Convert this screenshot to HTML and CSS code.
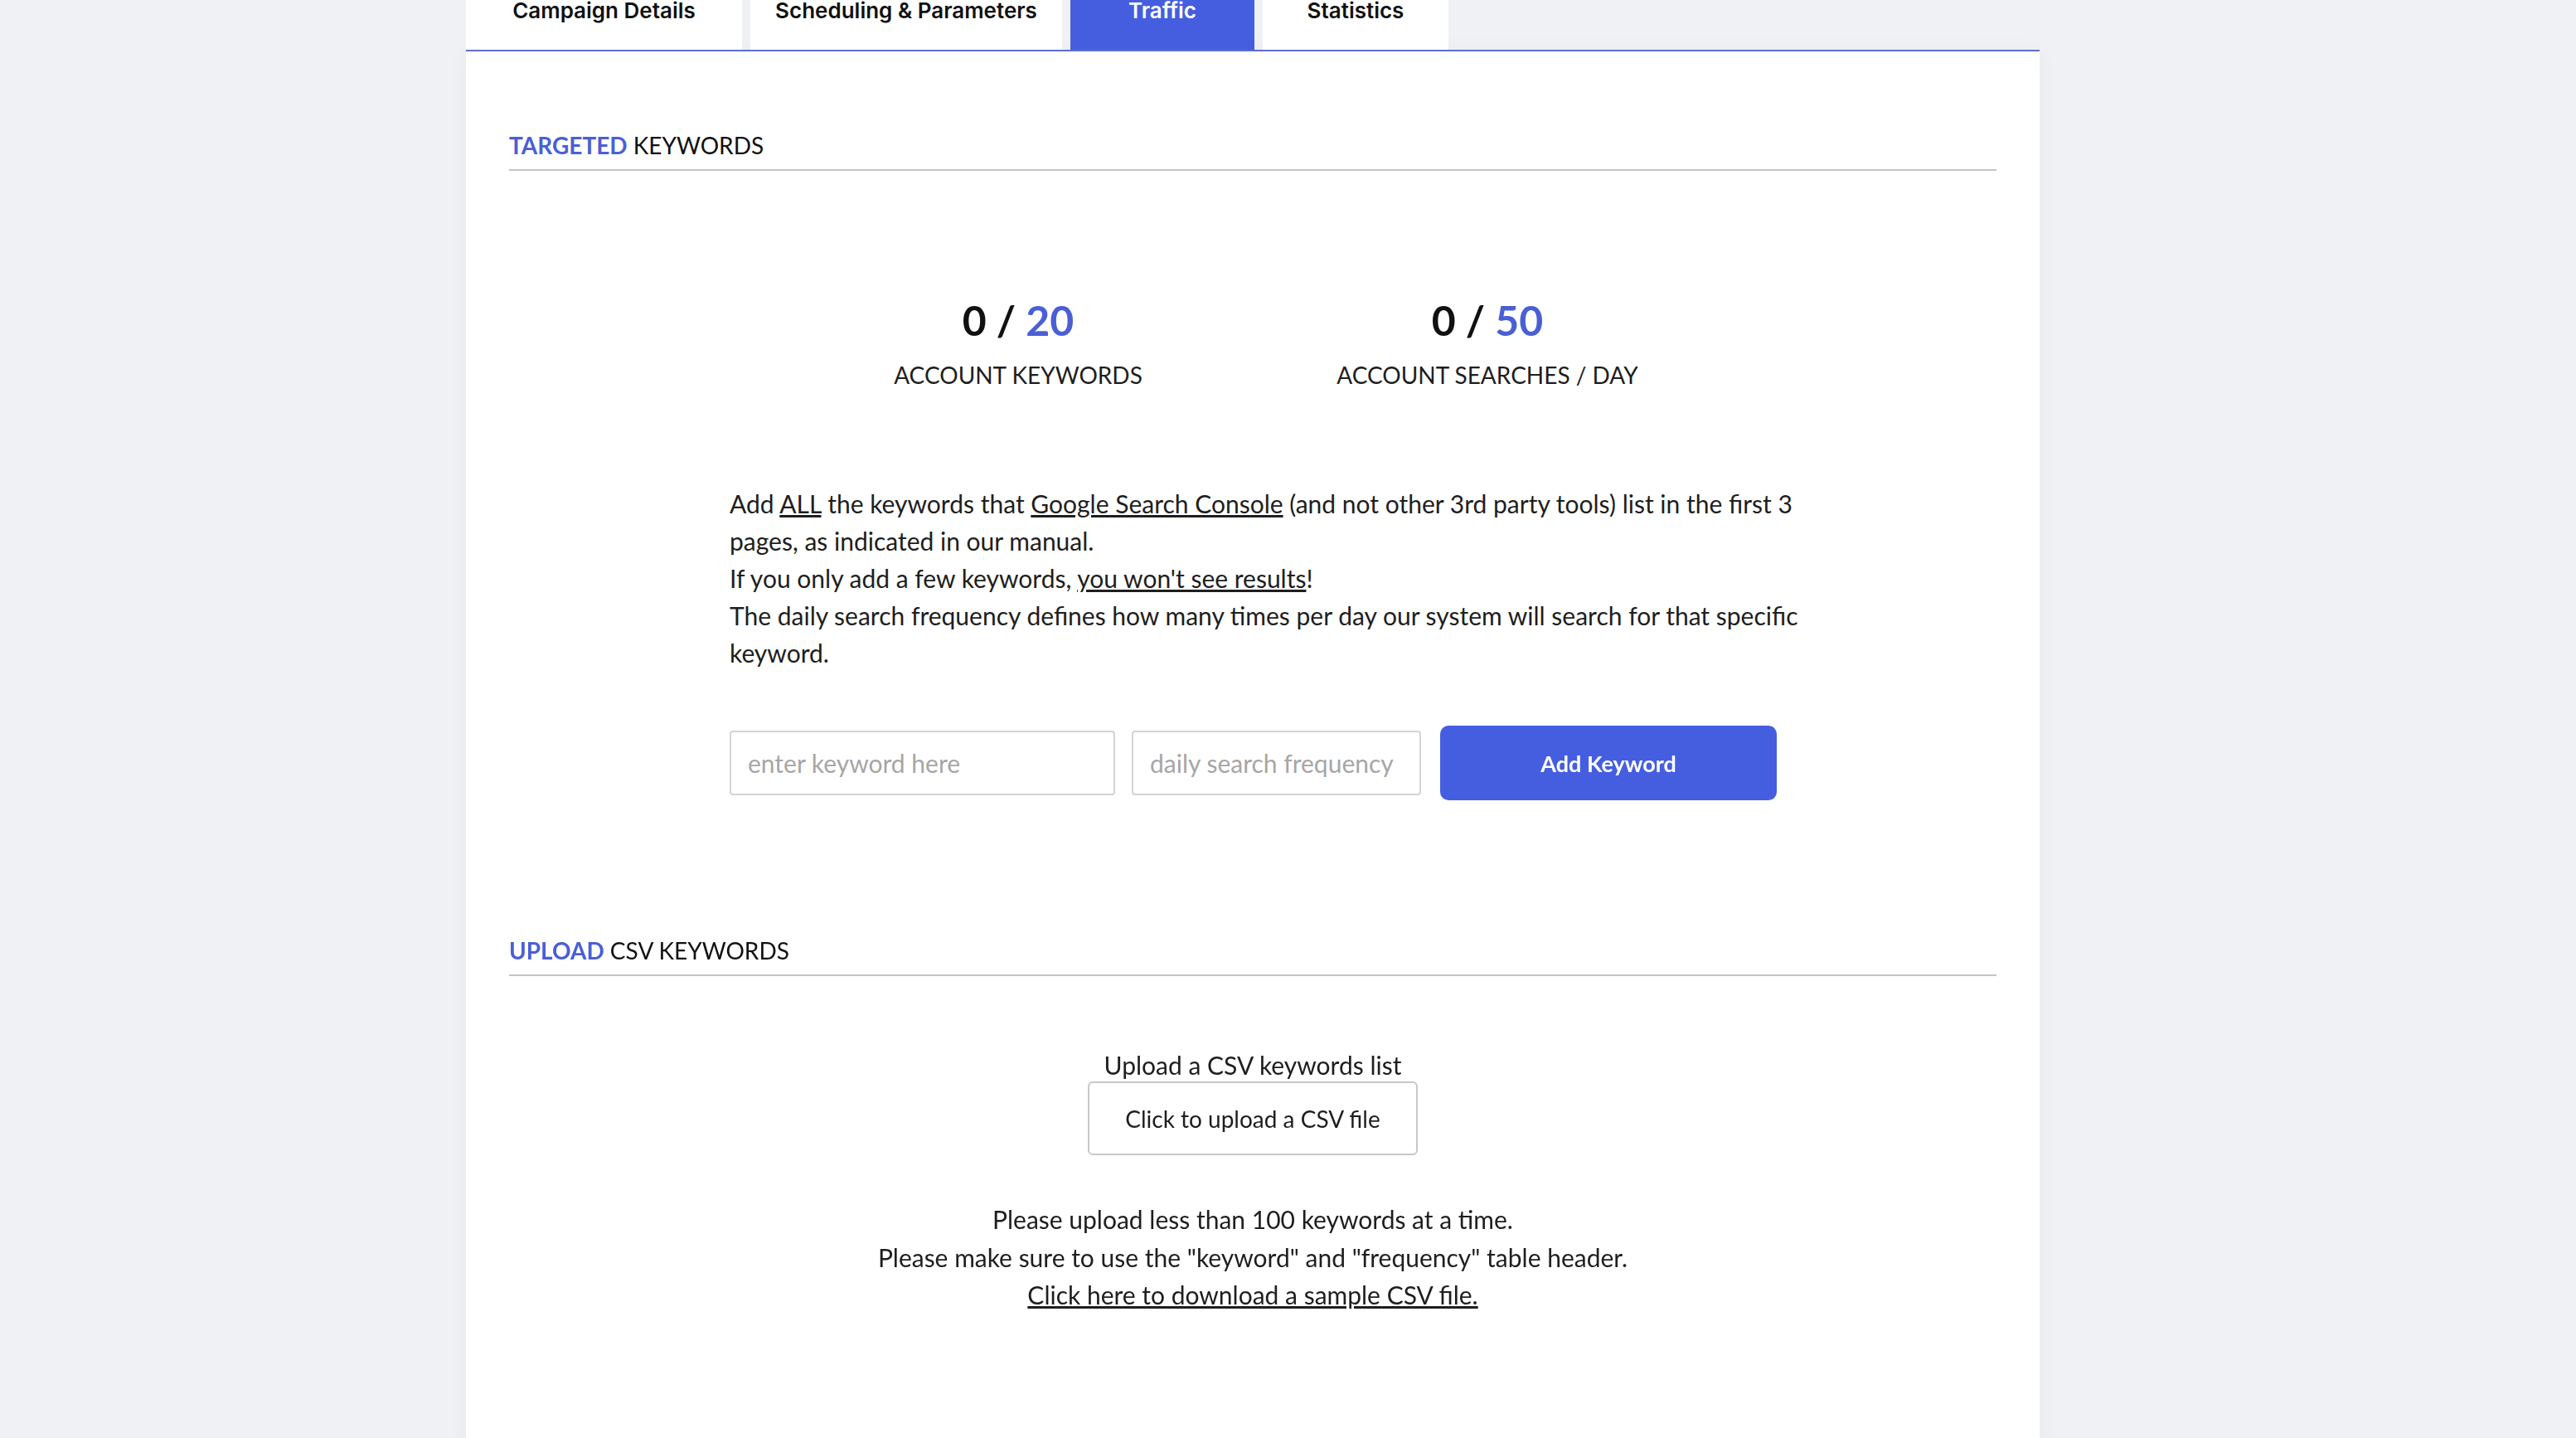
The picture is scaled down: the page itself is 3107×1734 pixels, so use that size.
FILE: index.html
```html
<!DOCTYPE html>
<html lang="en">
<head>
    <meta charset="UTF-8">
    <meta name="viewport" content="width=device-width, initial-scale=1.0">
    <title>Campaign - Traffic</title>
    <link rel="stylesheet" href="styles.css">
</head>
<body>
    <div class="page">
        <nav class="tabs">
            <a class="tab" href="#">Campaign Details</a>
            <a class="tab" href="#">Scheduling &amp; Parameters</a>
            <a class="tab active" href="#">Traffic</a>
            <a class="tab" href="#">Statistics</a>
        </nav>

        <div class="card">
            <h2 class="section-title"><span class="accent">TARGETED</span> KEYWORDS</h2>

            <div class="stats">
                <div class="stat">
                    <div class="stat-value">0 / <span class="accent">20</span></div>
                    <div class="stat-label">ACCOUNT KEYWORDS</div>
                </div>
                <div class="stat">
                    <div class="stat-value">0 / <span class="accent">50</span></div>
                    <div class="stat-label">ACCOUNT SEARCHES / DAY</div>
                </div>
            </div>

            <div class="intro">
                <p>Add <a href="#">ALL</a> the keywords that <a href="#">Google Search Console</a> (and not other 3rd party tools) list in the first 3 pages, as indicated in our manual.</p>
                <p>If you only add a few keywords, <a href="#">you won't see results</a>!</p>
                <p>The daily search frequency defines how many times per day our system will search for that specific keyword.</p>

                <form class="keyword-form" onsubmit="return false;">
                    <input type="text" class="field field-keyword" placeholder="enter keyword here" autofocus>
                    <input type="number" class="field field-frequency" placeholder="daily search frequency">
                    <button class="button" type="submit">Add Keyword</button>
                </form>
            </div>

            <h2 class="section-title upload-title"><span class="accent">UPLOAD</span> CSV KEYWORDS</h2>

            <div class="upload">
                <label class="upload-label" for="csv_file">Upload a CSV keywords list</label>
                <label class="upload-button" for="csv_file">Click to upload a CSV file</label>
                <input type="file" id="csv_file" accept=".csv">

                <div class="upload-notes">
                    <p>Please upload less than 100 keywords at a time.</p>
                    <p>Please make sure to use the "keyword" and "frequency" table header.</p>
                    <p><a href="#">Click here to download a sample CSV file.</a></p>
                </div>
            </div>
        </div>
    </div>
</body>
</html>
```

FILE: styles.css
```css
body {
    font-family: Lato, "Open Sans", sans-serif;
    background-color: #eff1f5;
    color: #1e1e1e;
    margin: 0;
    padding: 0;
    overflow: hidden;
}
a {
    color: inherit;
}
p {
    margin: 0;
}
.page {
    width: 1898px;
    margin: -36px 0 0 562px;
}
.tabs {
    display: grid;
    grid-template-columns: 333px 376px 222px 224px;
    column-gap: 10px;
    border-bottom: 2px solid #5f70cf;
}
.tab {
    display: flex;
    align-items: center;
    justify-content: center;
    height: 96px;
    background-color: white;
    font-family: Inter, Roboto, sans-serif;
    font-size: 26px;
    font-weight: 600;
    color: #111;
    text-decoration: none;
}
.tab.active {
    background-color: #455ee0;
    color: white;
}
.card {
    background-color: white;
    padding: 93px 52px 200px;
    box-shadow: 0 0 24px rgba(0, 0, 0, 0.04);
    min-height: 1600px;
}
.section-title {
    margin: 0;
    padding-bottom: 9px;
    border-bottom: 2px solid #c4c4c4;
    font-size: 28px;
    line-height: 40px;
    font-weight: 400;
    color: #111;
}
.section-title .accent {
    font-weight: 700;
}
.accent {
    color: #4a5fd6;
}
.stats {
    display: flex;
    justify-content: center;
    margin-top: 150px;
}
.stat {
    width: 566px;
    text-align: center;
}
.stat-value {
    font-size: 50px;
    line-height: 60px;
    font-weight: 700;
    color: #111;
}
.stat-label {
    margin-top: 16px;
    font-size: 28px;
    line-height: 40px;
}
.intro {
    margin: 113px 0 0 266px;
    width: 1330px;
    font-size: 30px;
    line-height: 45px;
}
.keyword-form {
    display: flex;
    align-items: center;
    margin-top: 65px;
}
.field {
    box-sizing: border-box;
    height: 78px;
    padding: 0 20px;
    border: 2px solid #d4d4d4;
    border-radius: 4px;
    font-family: inherit;
    font-size: 30px;
    color: #1e1e1e;
}
.field:focus {
    outline: none;
}
.field::placeholder {
    color: #a6a6a6;
}
.field-keyword {
    width: 465px;
}
.field-frequency {
    width: 349px;
    margin-left: 20px;
    -moz-appearance: textfield;
}
.field-frequency::-webkit-inner-spin-button {
    -webkit-appearance: none;
}
.button {
    width: 406px;
    height: 90px;
    margin-left: 23px;
    background-color: #455ee0;
    color: white;
    border: none;
    border-radius: 10px;
    font-family: inherit;
    font-size: 27px;
    font-weight: 700;
    cursor: pointer;
}
.button:hover {
    background-color: #3a52cf;
}
.upload-title {
    margin-top: 161px;
}
.upload {
    display: flex;
    flex-direction: column;
    align-items: center;
    margin-top: 87px;
    font-size: 30px;
}
.upload-label {
    line-height: 40px;
}
.upload-button {
    box-sizing: border-box;
    display: flex;
    align-items: center;
    justify-content: center;
    width: 398px;
    height: 89px;
    border: 2px solid #c8c8c8;
    border-radius: 6px;
    font-size: 28px;
    cursor: pointer;
}
#csv_file {
    display: none;
}
.upload-notes {
    margin-top: 55px;
    text-align: center;
    line-height: 45.5px;
}
```
